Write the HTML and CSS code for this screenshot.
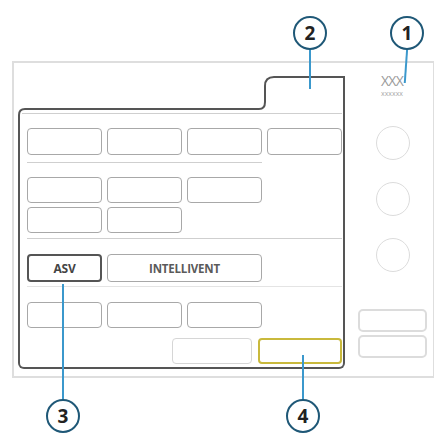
FILE: index.html
```html
<!DOCTYPE html>
<html lang="en">
<head>
    <meta charset="UTF-8">
    <meta name="viewport" content="width=device-width, initial-scale=1.0">
    <title>Modes window</title>
    <link rel="stylesheet" href="styles.css">
</head>
<body>
    <div class="stage">
        <div class="panel">
            <div class="main">
                <svg class="frame-top" width="327" height="40" viewBox="0 0 327 40">
                    <path d="M1,40 L1,39 Q1,33 7,33 L241,33 Q247,33 247,26 L247,10 Q247,1 256,1 L326,1 L326,40" fill="none" stroke="#555" stroke-width="2"/>
                    <line x1="4" y1="37.5" x2="324" y2="37.5" stroke="#cfcfcf" stroke-width="1"/>
                </svg>
                <div class="frame">
                    <div class="row four">
                        <div class="btn"></div>
                        <div class="btn"></div>
                        <div class="btn"></div>
                        <div class="btn"></div>
                    </div>
                    <div class="sep short sep1"></div>
                    <div class="row four r2">
                        <div class="btn"></div>
                        <div class="btn"></div>
                        <div class="btn"></div>
                    </div>
                    <div class="row four r3">
                        <div class="btn"></div>
                        <div class="btn"></div>
                    </div>
                    <div class="sep sep2"></div>
                    <div class="row four r4">
                        <div class="btn active">ASV</div>
                        <div class="btn wide">INTELLIVENT</div>
                    </div>
                    <div class="sep faint sep3"></div>
                    <div class="row four r5">
                        <div class="btn"></div>
                        <div class="btn"></div>
                        <div class="btn"></div>
                    </div>
                    <div class="row actions">
                        <div class="btn cancel"></div>
                        <div class="btn confirm"></div>
                    </div>
                </div>
            </div>
            <div class="side">
                <div class="side-title">XXX</div>
                <div class="side-sub">xxxxxx</div>
                <div class="knob k1"></div>
                <div class="knob"></div>
                <div class="knob"></div>
                <div class="side-btn sb1"></div>
                <div class="side-btn"></div>
            </div>
        </div>

        <div class="lead l1"></div>
        <div class="lead l2"></div>
        <div class="lead l3"></div>
        <div class="lead l4"></div>
        <div class="callout c1">1</div>
        <div class="callout c2">2</div>
        <div class="callout c3">3</div>
        <div class="callout c4">4</div>
    </div>
</body>
</html>
```
FILE: styles.css
```css
* {
    margin: 0;
    padding: 0;
    box-sizing: border-box;
}
body {
    font-family: "Open Sans", Arial, sans-serif;
    background-color: #fff;
    overflow: hidden;
}
.stage {
    position: relative;
    width: 435px;
    height: 436px;
    padding-top: 61px;
    padding-left: 12px;
}
.panel {
    display: flex;
    width: 422px;
    height: 317px;
    border: 2px solid #dedede;
    border-right-width: 1px;
    border-bottom-width: 2px;
}
.main {
    width: 333px;
    padding-top: 13px;
    padding-left: 4px;
}
.frame-top {
    display: block;
}
.frame {
    width: 327px;
    border: 2px solid #555;
    border-top: none;
    border-radius: 0 0 6px 6px;
    padding: 12px 1px 3px 7px;
}
.row {
    display: grid;
    grid-template-columns: repeat(4, 75px);
    gap: 5px;
}
.btn {
    height: 27px;
    border: 1.5px solid #a8a8a8;
    border-radius: 4px;
    display: flex;
    justify-content: center;
    align-items: center;
    font-size: 11.5px;
    font-weight: 700;
    color: #5a5a5a;
    letter-spacing: -0.2px;
}
.sep {
    height: 1px;
    background-color: #cfcfcf;
}
.sep.short {
    width: 235px;
}
.sep.faint {
    background-color: #e4e4e4;
}
.sep1 {
    margin-top: 7px;
}
.r2 {
    margin-top: 14px;
}
.r2 .btn, .r3 .btn {
    height: 26px;
}
.r3 {
    margin-top: 4px;
}
.sep2 {
    margin-top: 5px;
}
.r4 {
    margin-top: 15px;
}
.r4 .btn {
    height: 28px;
}
.btn.active {
    border: 2px solid #555;
    font-size: 12px;
    color: #444;
}
.btn.wide {
    grid-column: span 2;
}
.sep3 {
    margin-top: 4px;
}
.r5 {
    margin-top: 15px;
}
.r5 .btn {
    height: 26px;
}
.actions {
    display: flex;
    justify-content: flex-end;
    gap: 6px;
    margin-top: 10px;
}
.actions .btn {
    height: 26px;
}
.cancel {
    width: 80px;
    border-color: #d6d6d6;
}
.confirm {
    width: 84px;
    border: 2px solid #c9b93c;
}
.side {
    flex: 1;
    display: flex;
    flex-direction: column;
    align-items: center;
    padding-top: 10px;
}
.side-title {
    font-size: 14px;
    color: #9a9a9a;
    letter-spacing: -0.8px;
    line-height: 16px;
    margin-left: 4px;
}
.side-sub {
    font-size: 7px;
    color: #aaa;
    line-height: 9px;
    margin-left: 4px;
}
.knob {
    width: 34px;
    height: 34px;
    border: 1.5px solid #dcdcdc;
    border-radius: 50%;
    margin-top: 22px;
    margin-left: 6px;
}
.knob.k1 {
    margin-top: 28px;
}
.side-btn {
    width: 69px;
    height: 23px;
    border: 2px solid #dcdcdc;
    border-radius: 5px;
    margin-top: 3px;
    margin-left: 4px;
}
.side-btn.sb1 {
    margin-top: 37px;
}
.callout {
    position: absolute;
    width: 34px;
    height: 34px;
    border: 2.5px solid #1f5877;
    border-radius: 50%;
    background-color: #fff;
    display: flex;
    justify-content: center;
    align-items: center;
    font-size: 19px;
    font-weight: 700;
    color: #222;
}
.c1 { left: 390px; top: 16px; }
.c2 { left: 293px; top: 16px; }
.c3 { left: 46px; top: 399px; }
.c4 { left: 286px; top: 399px; }
.lead {
    position: absolute;
    width: 2px;
    background-color: #3b98cc;
}
.l1 { left: 405px; top: 48px; height: 35px; transform: rotate(4deg); }
.l2 { left: 309px; top: 48px; height: 41px; }
.l3 { left: 62px; top: 284px; height: 116px; }
.l4 { left: 302px; top: 355px; height: 45px; }
```
